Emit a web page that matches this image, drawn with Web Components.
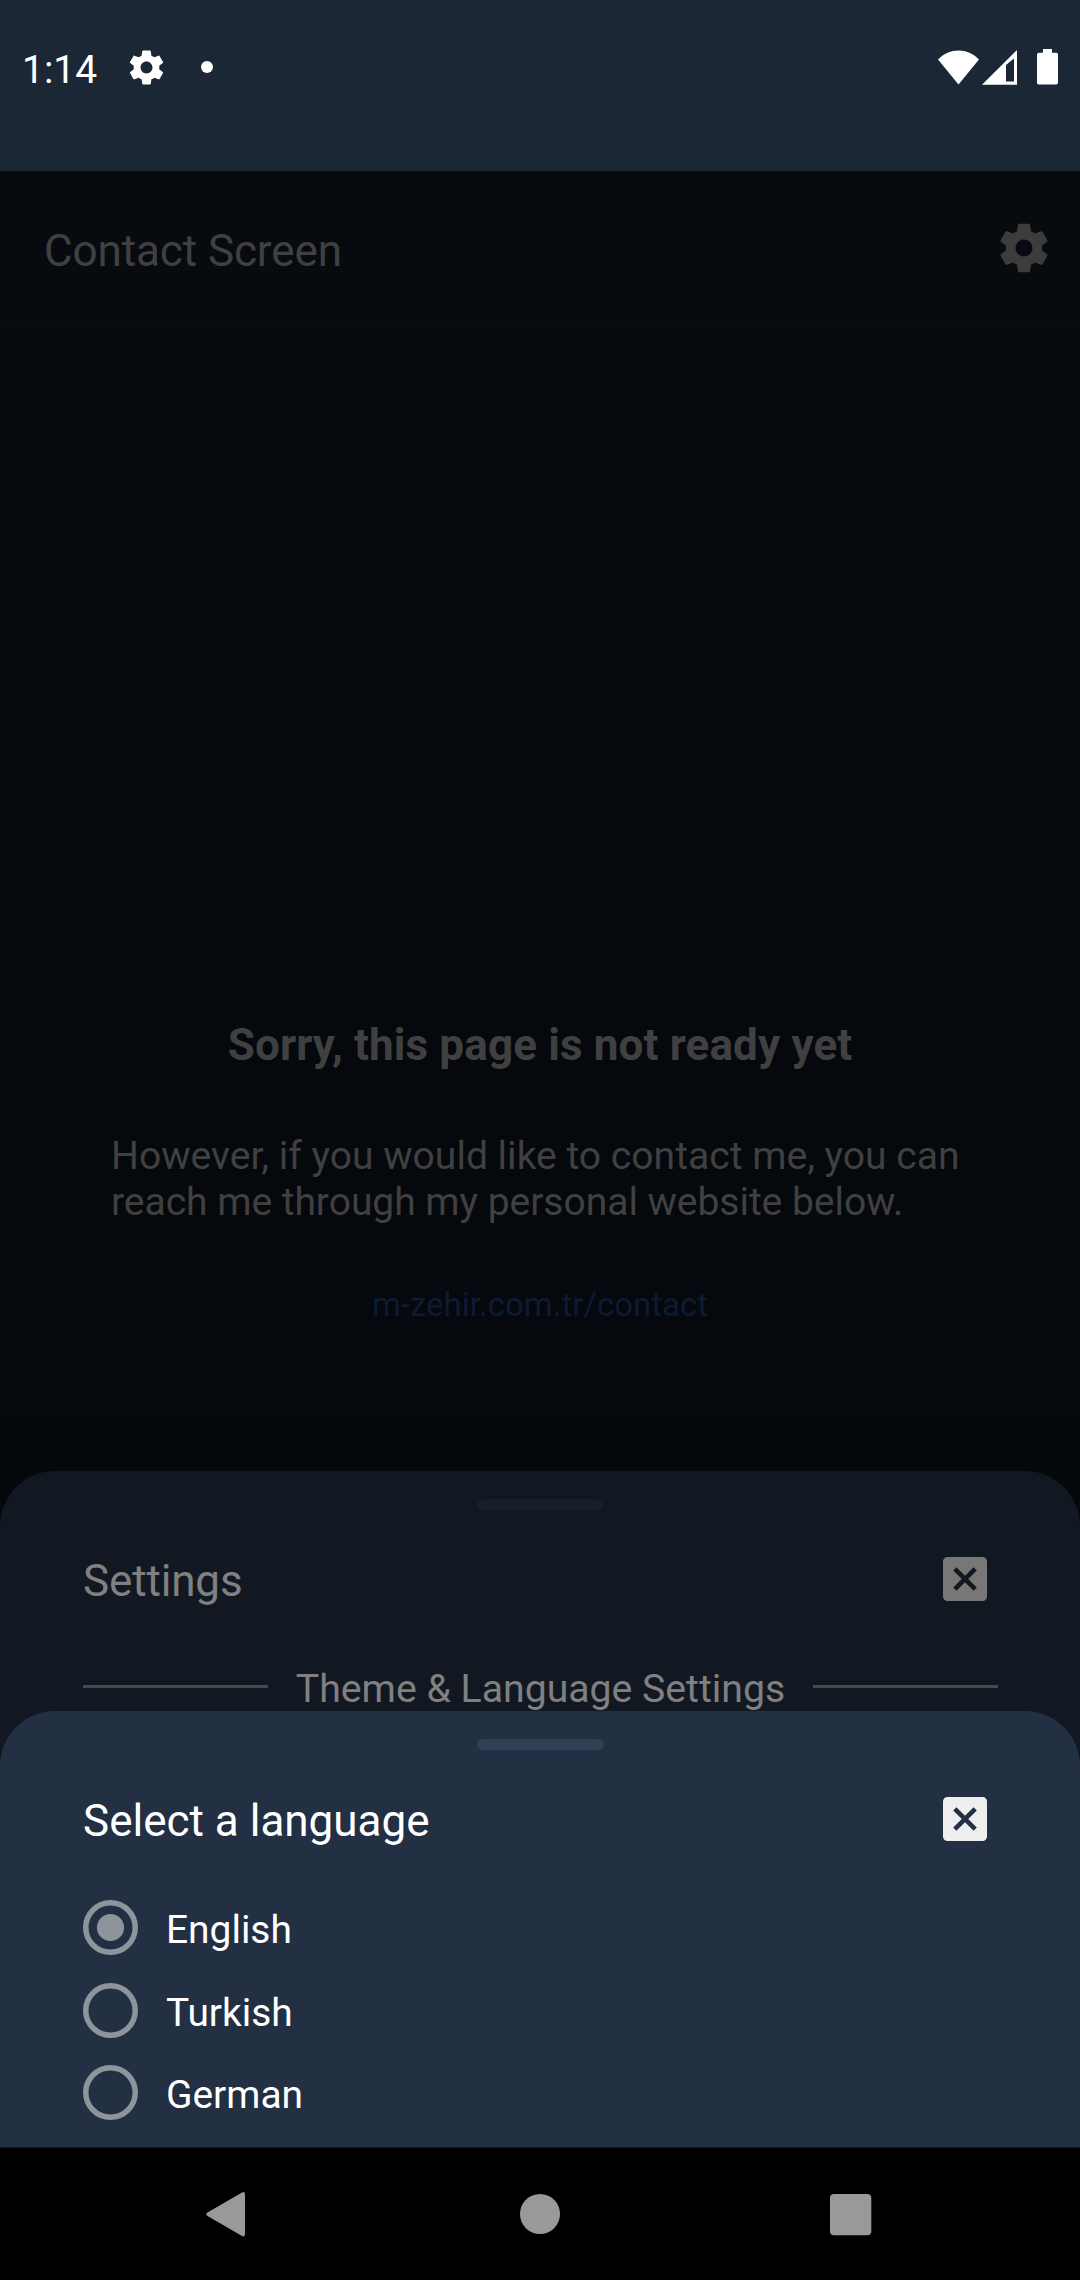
<!DOCTYPE html>
<html lang="en">
<head>
<meta charset="utf-8">
<title>Contact Screen</title>
<style>
html,body{margin:0;padding:0;background:#000}
body{width:1080px;height:2280px;overflow:hidden;font-family:Roboto,"Liberation Sans",sans-serif}
</style>
</head>
<body>
<phone-screen></phone-screen>
<script>
const define = (name, html) => {
  const t = document.createElement('template');
  t.innerHTML = html;
  customElements.define(name, class extends HTMLElement {
    constructor() {
      super();
      this.attachShadow({ mode: 'open' }).appendChild(t.content.cloneNode(true));
    }
  });
};

define('gear-icon', `
<style>:host{display:block;flex:none}svg{display:block;width:100%;height:100%}</style>
<svg viewBox="0 0 24 24" fill="currentColor"><path d="M19.43 12.98c.04-.32.07-.64.07-.98s-.03-.66-.07-.98l2.11-1.65c.19-.15.24-.42.12-.64l-2-3.46c-.12-.22-.39-.3-.61-.22l-2.49 1c-.52-.4-1.08-.73-1.69-.98l-.38-2.65C14.46 2.18 14.25 2 14 2h-4c-.25 0-.46.18-.49.42l-.38 2.65c-.61.25-1.17.59-1.69.98l-2.49-1c-.23-.09-.49 0-.61.22l-2 3.46c-.13.22-.07.49.12.64l2.11 1.65c-.04.32-.07.65-.07.98s.03.66.07.98l-2.11 1.65c-.19.15-.24.42-.12.64l2 3.46c.12.22.39.3.61.22l2.49-1c.52.4 1.08.73 1.69.98l.38 2.65c.03.24.24.42.49.42h4c.25 0 .46-.18.49-.42l.38-2.65c.61-.25 1.17-.59 1.69-.98l2.49 1c.23.09.49 0 .61-.22l2-3.46c.12-.22.07-.49-.12-.64l-2.11-1.65zM12 15.5c-1.93 0-3.5-1.57-3.5-3.5s1.57-3.5 3.5-3.5 3.5 1.57 3.5 3.5-1.57 3.5-3.5 3.5z"/></svg>`);

define('close-box', `
<style>:host{display:block;flex:none;width:44px;height:44px}svg{display:block}</style>
<svg width="44" height="44" viewBox="0 0 44 44" fill="currentColor"><path fill-rule="evenodd" d="M4.5 0H39.5A4.5 4.5 0 0 1 44 4.5V39.5A4.5 4.5 0 0 1 39.5 44H4.5A4.5 4.5 0 0 1 0 39.5V4.5A4.5 4.5 0 0 1 4.5 0ZM13.4 10.2L10.2 13.4L18.8 22L10.2 30.6L13.4 33.8L22 25.2L30.6 33.8L33.8 30.6L25.2 22L33.8 13.4L30.6 10.2L22 18.8Z"/></svg>`);

define('status-bar', `
<style>
:host{display:flex;box-sizing:border-box;height:171px;background:#1b2734;color:#fff;padding:47px 21px 0 22px;justify-content:space-between;align-items:flex-start}
div{display:flex}
.left{align-items:flex-start}
.time{font-size:39px;line-height:46px}
gear-icon{width:41px;height:41px;margin:0 0 0 29px}
.dot{width:12px;height:12px;border-radius:50%;background:#fff;margin:14px 0 0 34px}
svg{display:block}
</style>
<div class="left"><span class="time">1:14</span><gear-icon></gear-icon><span class="dot"></span></div>
<div><svg width="121" height="38" viewBox="938 47 121 38" fill="#fff">
<path d="M938 59.5C949.5 47.5 967.5 47.5 979 59.5L958.5 84.5Z"/>
<path fill-rule="evenodd" d="M982 84.7L1017 50V84.7ZM1006 65V81.5H1014V58.5Z"/>
<path d="M1043 49H1052V52.7H1056.3Q1058 52.7 1058 54.5V82.8Q1058 84.6 1056.2 84.6H1038.8Q1037 84.6 1037 82.8V54.5Q1037 52.7 1038.8 52.7H1043Z"/></svg></div>`);

define('app-header', `
<style>
:host{display:flex;box-sizing:border-box;height:154px;background:#070b10;color:#404040;padding:0 27px 0 44px;justify-content:space-between;align-items:center;font-size:44px;line-height:52px;letter-spacing:-.1px}
span{padding-top:6px}
gear-icon{width:58px;height:58px;color:#3c3c3c}
</style>
<span><slot></slot></span><gear-icon></gear-icon>`);

define('contact-page', `
<style>
:host{display:flex;flex-direction:column;align-items:center;box-sizing:border-box;flex:1;padding-top:694px;background:linear-gradient(#0a0b0d,#05080d 14px,#05080d 1020px,#05080b 1150px);color:#404040}
h1{margin:0;font-size:44px;line-height:52px;font-weight:700;letter-spacing:.14px}
p{margin:62px 0 60px;width:858px;font-size:39.1px;line-height:46px;white-space:nowrap}
p span{letter-spacing:-.06px}
a{font-size:33px;line-height:40px;color:#0c1b33}
</style>
<h1>Sorry, this page is not ready yet</h1>
<p>However, if you would like to contact me, you can<br><span>reach me through my personal website below.</span></p>
<a>m-zehir.com.tr/contact</a>`);

define('bottom-sheet', `
<style>
:host{display:flex;flex-direction:column;box-sizing:border-box;position:absolute;left:0;right:0;bottom:133px;padding:28px 82px 0 83px;border-radius:55px 55px 0 0;background:#232f42;color:#fff;--box:#eee;--handle:#323e54}
:host([dimmed]){background:#111821;color:#808080;--box:#777;--handle:#181e29}
.handle{width:127px;height:11px;border-radius:5.5px;background:var(--handle);align-self:center;margin-right:1px}
:host([dimmed]) .handle{width:126px}
header{display:flex;justify-content:space-between;align-items:flex-start;margin-top:45px;padding-right:11px;font-size:44px;line-height:52px}
:host([dimmed]) header{letter-spacing:-.15px}
close-box{color:var(--box);margin-top:2px}
</style>
<div class="handle"></div>
<header><slot name="title"></slot><close-box></close-box></header>
<slot></slot>`);

define('section-divider', `
<style>
:host{display:flex;gap:28px;align-items:flex-start;margin-top:59px;font-size:39.2px;line-height:46px;white-space:nowrap}
i{flex:1;height:3px;background:#47494d;margin-top:19px}
</style>
<i></i><span><slot></slot></span><i></i>`);

define('radio-row', `
<style>
:host{display:flex;align-items:center;gap:28px;height:55px;font-size:38.9px;line-height:46px}
svg{display:block;flex:none}
.dot{display:none}
:host([checked]) .dot{display:inline}
.label{padding-top:5px}
</style>
<svg width="55" height="55" viewBox="0 0 55 55"><circle cx="27.5" cy="27.5" r="24.75" fill="none" stroke="#8e949c" stroke-width="5.5"/><circle class="dot" cx="27.5" cy="27.5" r="13.6" fill="#8e949c"/></svg><span class="label"><slot></slot></span>`);

define('language-list', `
<style>:host{display:flex;flex-direction:column;gap:27.5px;margin-top:53px}</style><slot></slot>`);

define('nav-bar', `
<style>
:host{display:flex;height:132px;background:#000;border-top:1px solid #10151e}
svg{display:block}
</style>
<svg width="1080" height="132" viewBox="0 2148 1080 132" fill="#999">
<path d="M242 2192.6Q245 2191 245 2194.5V2234Q245 2237.6 242 2236L207.5 2216Q205 2214.3 207.5 2212.6Z"/>
<circle cx="540" cy="2214" r="20"/><rect x="830" y="2194" width="41.3" height="41.3" rx="4"/></svg>`);

define('phone-screen', `
<style>
:host{display:flex;flex-direction:column;position:relative;width:1080px;height:2280px}
.settings{height:676px}
.language{height:436px}
</style>
<status-bar></status-bar>
<app-header>Contact Screen</app-header>
<contact-page></contact-page>
<nav-bar></nav-bar>
<bottom-sheet class="settings" dimmed><span slot="title">Settings</span>
<section-divider>Theme &amp; Language Settings</section-divider></bottom-sheet>
<bottom-sheet class="language"><span slot="title">Select a language</span>
<language-list><radio-row checked>English</radio-row><radio-row>Turkish</radio-row><radio-row>German</radio-row></language-list></bottom-sheet>`);
</script>
</body>
</html>
